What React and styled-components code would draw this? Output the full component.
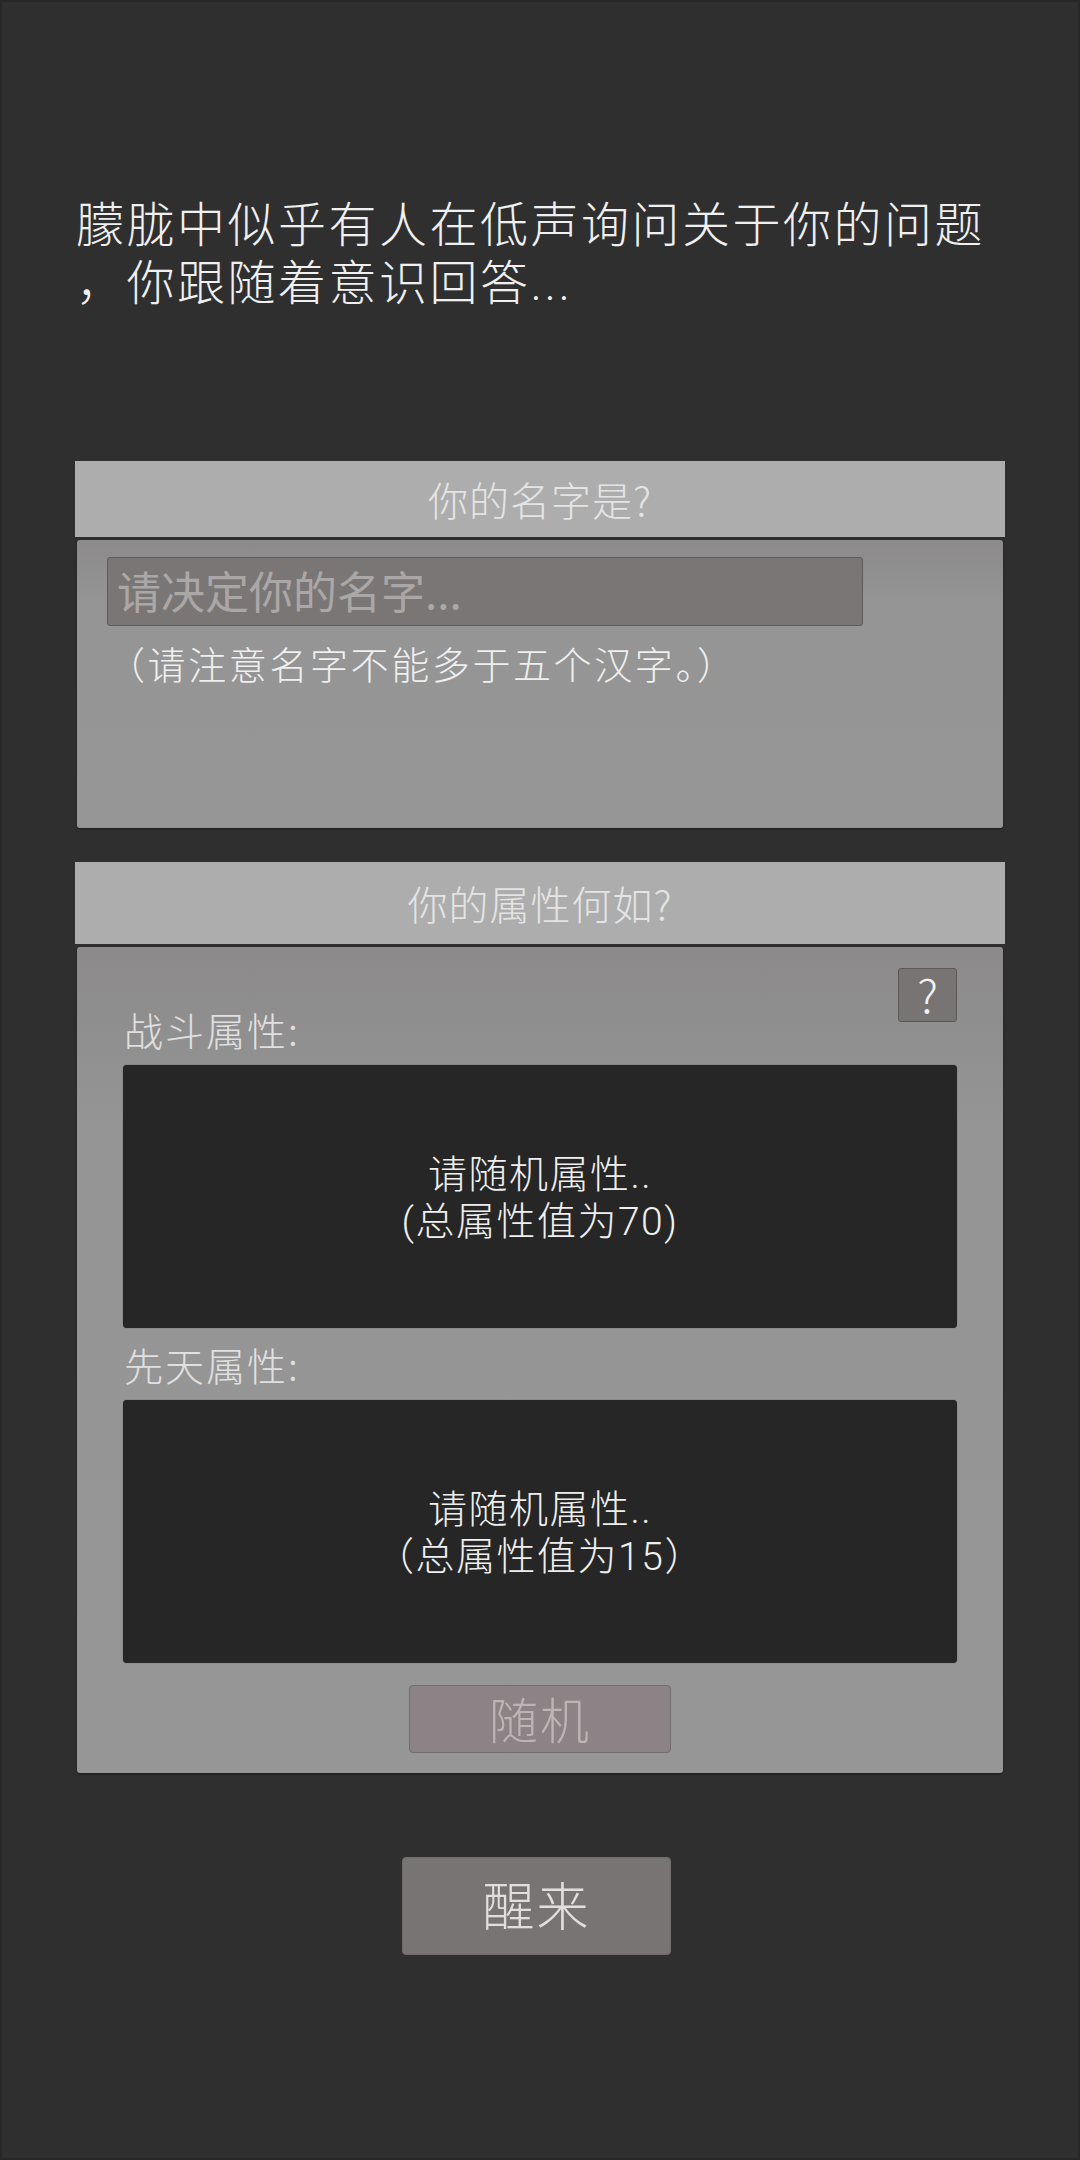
import React from "react";
import styled, { createGlobalStyle } from "styled-components";

const GlobalStyle = createGlobalStyle`
  html, body {
    margin: 0;
    padding: 0;
    background: #2f2f2f;
  }
  * {
    box-sizing: border-box;
  }
`;

const FONT = `"Noto Sans CJK SC", "Noto Sans", sans-serif`;
const TIGHT_FONT = `Roboto, "Noto Sans CJK SC", sans-serif`;

const Screen = styled.div`
  width: 1080px;
  min-height: 2160px;
  background: #2f2f2f;
  box-shadow: inset 0 0 0 2px #272727;
  font-family: ${FONT};
  font-weight: 300;
  display: flex;
  flex-direction: column;
  align-items: center;
`;

const Intro = styled.p`
  align-self: stretch;
  margin: 197px 0 0 0;
  padding-left: 76px;
  font-family: ${TIGHT_FONT};
  font-weight: 300;
  font-size: 48px;
  line-height: 58px;
  letter-spacing: 2.5px;
  color: #f0f0f0;
  white-space: nowrap;
`;

const Panel = styled.section`
  width: 930px;
  margin-top: ${(p) => p.$top}px;
  display: flex;
  flex-direction: column;
`;

const PanelHeader = styled.div`
  height: ${(p) => p.$height}px;
  background: #adadad;
  color: #e4e4e4;
  font-size: 40px;
  letter-spacing: 1px;
  display: flex;
  align-items: center;
  justify-content: center;
  line-height: 1;
`;

const PanelBody = styled.div`
  margin: 3px 2px 0 2px;
  min-height: ${(p) => p.$height || 0}px;
  background: linear-gradient(to bottom, #8c8a8a 0%, #959595 22%, #969696 100%);
  border-radius: 3px;
  box-shadow: 0 1px 2px rgba(0, 0, 0, 0.45);
  padding: ${(p) => p.$padding};
  display: flex;
  flex-direction: column;
`;

const NameInput = styled.input`
  width: 756px;
  height: 69px;
  background: #7a7676;
  border: 1px solid #5f5b5b;
  border-radius: 3px;
  padding: 0 0 4px 9px;
  font-family: ${FONT};
  font-weight: 400;
  font-size: 44px;
  color: #e8e8e8;
  outline: none;
  &::placeholder {
    color: #aca7a7;
  }
`;

const Note = styled.p`
  margin: 14px 0 0 0;
  font-size: 38px;
  line-height: 46px;
  letter-spacing: 2.6px;
  color: #efefef;
  white-space: nowrap;
`;

const TopRow = styled.div`
  display: flex;
  justify-content: space-between;
  align-items: flex-start;
`;

const HelpButton = styled.button`
  width: 59px;
  height: 54px;
  background: #787474;
  border: 1px solid #5c5858;
  border-radius: 3px;
  color: #f2f2f2;
  font-family: ${FONT};
  font-weight: 300;
  font-size: 46px;
  line-height: 1;
  padding: 0 0 4px 0;
  cursor: pointer;
`;

const Label = styled.div`
  margin-top: ${(p) => p.$top || 0}px;
  padding-left: 1px;
  font-size: 39px;
  line-height: 46px;
  letter-spacing: 2px;
  color: #e0e0e0;
  white-space: nowrap;
`;

const StatBox = styled.div`
  margin-top: 13px;
  height: 263px;
  background: #262626;
  border-radius: 4px;
  box-shadow: 0 0 1px rgba(0, 0, 0, 0.6);
  display: flex;
  flex-direction: column;
  align-items: center;
  justify-content: center;
  padding-top: 4px;
  color: #efefef;
  font-family: ${TIGHT_FONT};
  font-weight: 300;
  font-size: 39px;
  line-height: 47px;
  letter-spacing: 1.5px;
  text-align: center;
`;

const ActionButton = styled.button`
  align-self: center;
  width: ${(p) => p.$width}px;
  height: ${(p) => p.$height}px;
  margin-top: ${(p) => p.$top}px;
  margin-right: ${(p) => p.$shift || 0}px;
  background: ${(p) => p.$bg};
  border: 1px solid ${(p) => p.$border};
  border-radius: 4px;
  color: ${(p) => p.$color};
  font-family: ${FONT};
  font-weight: 300;
  font-size: ${(p) => p.$size}px;
  letter-spacing: 2px;
  line-height: 1;
  padding: 0 0 4px 0;
  cursor: pointer;
`;

export default function App() {
  return (
    <>
      <GlobalStyle />
      <Screen>
        <Intro>
          朦胧中似乎有人在低声询问关于你的问题
          <br />
          ，你跟随着意识回答...
        </Intro>

        <Panel $top={148}>
          <PanelHeader $height={76}>你的名字是?</PanelHeader>
          <PanelBody $height={288} $padding="17px 0 0 30px">
            <NameInput placeholder="请决定你的名字..." />
            <Note>（请注意名字不能多于五个汉字。）</Note>
          </PanelBody>
        </Panel>

        <Panel $top={34}>
          <PanelHeader $height={82}>你的属性何如?</PanelHeader>
          <PanelBody $padding="21px 46px 20px 46px">
            <TopRow>
              <Label $top={38}>战斗属性:</Label>
              <HelpButton>?</HelpButton>
            </TopRow>
            <StatBox>
              <div>请随机属性..</div>
              <div>(总属性值为70)</div>
            </StatBox>
            <Label $top={13}>先天属性:</Label>
            <StatBox>
              <div>请随机属性..</div>
              <div>（总属性值为15）</div>
            </StatBox>
            <ActionButton
              $width={262}
              $height={68}
              $top={22}
              $bg="#8b8385"
              $border="#736d6e"
              $color="#bdb5b5"
              $size={49}
            >
              随机
            </ActionButton>
          </PanelBody>
        </Panel>

        <ActionButton
          $width={269}
          $height={98}
          $top={84}
          $shift={7}
          $bg="#787474"
          $border="#6f6b6b"
          $color="#e2dede"
          $size={52}
        >
          醒来
        </ActionButton>
      </Screen>
    </>
  );
}
